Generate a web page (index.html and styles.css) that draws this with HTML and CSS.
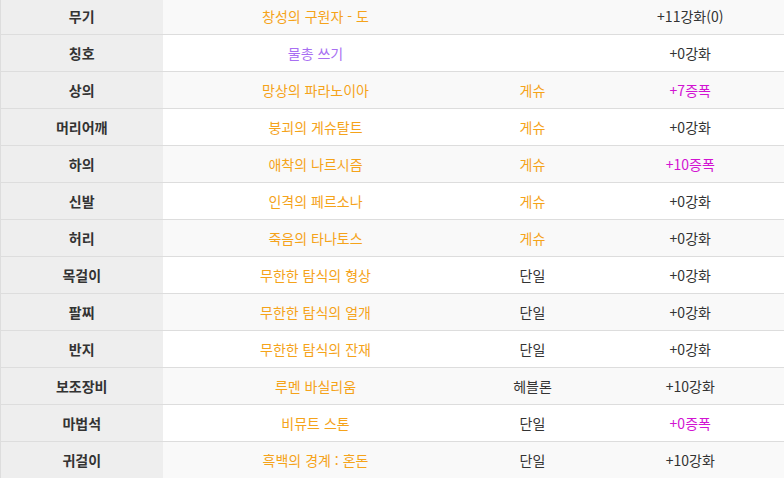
FILE: index.html
```html
<!DOCTYPE html>
<html lang="ko">
<head>
    <meta charset="UTF-8">
    <meta name="viewport" content="width=device-width, initial-scale=1.0">
    <title>장비 정보</title>
    <link rel="stylesheet" href="styles.css">
</head>
<body>

<table class="equip">
    <colgroup>
        <col class="col-slot">
        <col class="col-name">
        <col class="col-set">
        <col class="col-level">
    </colgroup>
    <tbody>
        <tr><th>무기</th><td class="legend">창성의 구원자 - 도</td><td></td><td>+11강화(0)</td></tr>
        <tr><th>칭호</th><td class="epic">물총 쓰기</td><td></td><td>+0강화</td></tr>
        <tr><th>상의</th><td class="legend">망상의 파라노이아</td><td class="legend">게슈</td><td class="amp">+7증폭</td></tr>
        <tr><th>머리어깨</th><td class="legend">붕괴의 게슈탈트</td><td class="legend">게슈</td><td>+0강화</td></tr>
        <tr><th>하의</th><td class="legend">애착의 나르시즘</td><td class="legend">게슈</td><td class="amp">+10증폭</td></tr>
        <tr><th>신발</th><td class="legend">인격의 페르소나</td><td class="legend">게슈</td><td>+0강화</td></tr>
        <tr><th>허리</th><td class="legend">죽음의 타나토스</td><td class="legend">게슈</td><td>+0강화</td></tr>
        <tr><th>목걸이</th><td class="legend">무한한 탐식의 형상</td><td>단일</td><td>+0강화</td></tr>
        <tr><th>팔찌</th><td class="legend">무한한 탐식의 얼개</td><td>단일</td><td>+0강화</td></tr>
        <tr><th>반지</th><td class="legend">무한한 탐식의 잔재</td><td>단일</td><td>+0강화</td></tr>
        <tr><th>보조장비</th><td class="legend">루멘 바실리움</td><td>헤블론</td><td>+10강화</td></tr>
        <tr><th>마법석</th><td class="legend">비뮤트 스톤</td><td>단일</td><td class="amp">+0증폭</td></tr>
        <tr><th>귀걸이</th><td class="legend">흑백의 경계 : 혼돈</td><td>단일</td><td>+10강화</td></tr>
    </tbody>
</table>

</body>
</html>
```

FILE: styles.css
```css
body {
    margin: 0;
    background-color: #fff;
    font-family: "Noto Sans CJK KR", "Noto Sans", sans-serif;
    font-size: 14px;
    color: #333;
}
.equip {
    width: 100%;
    margin-top: -3px;
    border-collapse: collapse;
    table-layout: fixed;
}
.col-slot { width: 162px; }
.col-name { width: 306px; }
.col-set { width: 128px; }
.equip th,
.equip td {
    height: 37px;
    padding: 0 8px;
    border-top: 1px solid #ddd;
    text-align: center;
    line-height: 20px;
    box-sizing: border-box;
}
.equip th {
    background-color: #eee;
    border-left: 1px solid #ddd;
    font-weight: bold;
}
.equip tr:nth-child(odd) td {
    background-color: #f9f9f9;
}
.legend {
    color: #f5a31a;
}
.epic {
    color: #a86ff2;
}
.amp {
    color: #d214d2;
}
```
